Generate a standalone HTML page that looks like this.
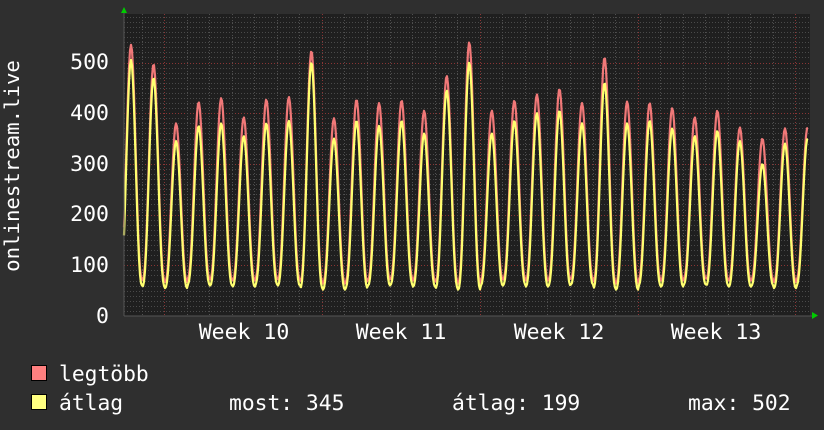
<!DOCTYPE html>
<html><head><meta charset="utf-8"><style>
html,body{margin:0;padding:0;background:#2f2f2f;width:824px;height:430px;overflow:hidden}
svg{display:block}
text{font-family:"DejaVu Sans Mono","Liberation Mono",monospace;fill:#fff}
</style></head><body>
<svg id="g" width="824" height="430" xmlns="http://www.w3.org/2000/svg">
<rect x="0" y="0" width="824" height="430" fill="#2f2f2f"/>
<rect x="124" y="14" width="686" height="302" fill="#1f1f1f"/>
<g id="grid"></g>
<g id="data"></g>
<line x1="124" y1="316" x2="812" y2="316" stroke="#555" stroke-width="1"/>
<line x1="124" y1="12" x2="124" y2="316" stroke="#555" stroke-width="1"/>
<polygon points="121,13 127,13 124,7" fill="#0c0"/>
<polygon points="812,312 812,319 818,315.5" fill="#0c0"/>
<g font-size="21.5" text-anchor="end">
<text x="109" y="323">0</text>
<text x="109" y="272">100</text>
<text x="109" y="221">200</text>
<text x="109" y="171">300</text>
<text x="109" y="120">400</text>
<text x="109" y="69">500</text>
</g>
<text transform="translate(19,166) rotate(-90)" font-size="20.7" text-anchor="middle">onlinestream.live</text>
<g font-size="21.5" text-anchor="middle">
<text x="244" y="339">Week 10</text>
<text x="401" y="339">Week 11</text>
<text x="559" y="339">Week 12</text>
<text x="716" y="339">Week 13</text>
</g>
<rect x="31.5" y="365.5" width="15" height="15" fill="#ff8080" stroke="#000"/>
<rect x="31.5" y="394.5" width="15" height="15" fill="#ffff80" stroke="#000"/>
<g font-size="21.3">
<text x="59" y="381">legtöbb</text>
<text x="59" y="410">átlag</text>
<text x="229" y="410">most: 345</text>
<text x="452" y="410">átlag: 199</text>
<text x="688" y="410">max: 502</text>
</g>
</svg>
<script>
(function(){
var NS="http://www.w3.org/2000/svg";
var grid=document.getElementById("grid"),data=document.getElementById("data");
function ln(x1,y1,x2,y2,c,d){var l=document.createElementNS(NS,"line");l.setAttribute("x1",x1);l.setAttribute("y1",y1);l.setAttribute("x2",x2);l.setAttribute("y2",y2);l.setAttribute("stroke",c);l.setAttribute("stroke-width","1");if(d)l.setAttribute("stroke-dasharray",d);grid.appendChild(l);}
var y0=316,sc=0.507;
for(var v=10;v<600;v+=10){var y=Math.round(y0-v*sc)+0.5;if(y<14)break;ln(124,y,810,y,v%100==0?"#8a3535":"#4a4a4a","1,2");}
for(var x=141.5;x<810;x+=22.55){var m=((x-164)%158+158)%158;var major=m<3||m>155;ln(Math.round(x)+0.5,14,Math.round(x)+0.5,316,major?"#8a3535":"#505050","1,2");}
var peaks=[535,497,380,422,430,392,427,432,523,390,427,420,425,405,474,540,405,425,437,448,420,510,423,420,410,392,405,372,350,370,372];
var ypk=[505,470,345,375,380,355,380,385,500,350,385,375,385,360,445,500,360,385,400,405,380,460,380,385,370,355,365,345,300,340,350];
var mins=[60,58,55,62,60,58,62,60,55,52,55,60,62,58,55,52,60,62,58,60,62,55,52,60,58,62,60,58,60,55,60];
var P=22.55,x0=131;
function val(x,arr,lo){var k=Math.round((x-x0)/P);k=Math.max(0,Math.min(arr.length-1,k));var t=(x-x0-k*P)/P;var s=Math.pow((1+Math.cos(2*Math.PI*t))/2,1.3);var mn=mins[k]+lo;return mn+(arr[k]-mn)*s;}
function path(arr,lo,col){var d="";for(var x=124;x<=808;x+=1){var v=val(x,arr,lo);var y=(y0-v*sc).toFixed(1);d+=(x==124?"M":"L")+x+" "+y+" ";}
var p=document.createElementNS(NS,"path");p.setAttribute("d",d);p.setAttribute("fill","none");p.setAttribute("stroke",col);p.setAttribute("stroke-width","2.2");p.setAttribute("stroke-linejoin","round");data.appendChild(p);}
path(peaks,12,"#f07878");path(ypk,0,"#ffff70");
})();
</script>
</body></html>
